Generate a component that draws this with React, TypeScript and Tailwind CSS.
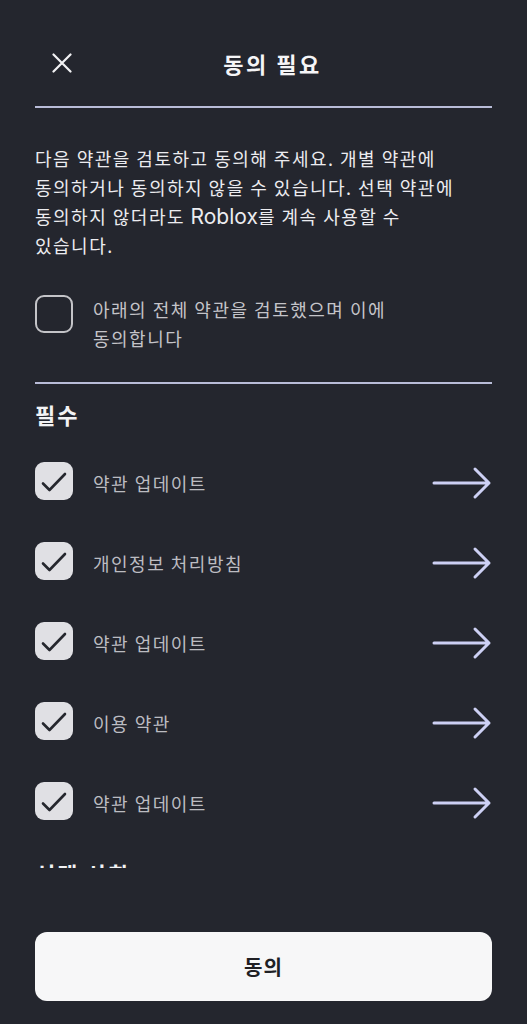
import React from "react";

const font = { fontFamily: '"Noto Sans CJK KR", "Noto Sans", sans-serif' };

function Arrow() {
  return (
    <svg width="60" height="34" viewBox="0 0 60 34" fill="none" className="shrink-0">
      <path d="M2 17H57M43 3L57 17L43 31" stroke="#cdd0f4" strokeWidth="3" strokeLinecap="round" strokeLinejoin="round" />
    </svg>
  );
}

function CheckedBox() {
  return (
    <div className="w-[38px] h-[38px] shrink-0 rounded-[9px] bg-[#e0e0e4] flex items-center justify-center -mt-[5px]">
      <svg width="38" height="38" viewBox="0 0 38 38" fill="none">
        <path d="M8 21.5L14.5 28L30 12" stroke="#25272e" strokeWidth="2.6" strokeLinecap="round" strokeLinejoin="round" />
      </svg>
    </div>
  );
}

const items = ["약관 업데이트", "개인정보 처리방침", "약관 업데이트", "이용 약관", "약관 업데이트"];

export default function App() {
  return (
    <div className="w-full h-[1024px] bg-[#24262e] flex flex-col overflow-hidden" style={font}>
      <div className="px-[35px] shrink-0">
        <div className="flex items-center h-[106px] pt-[20px]">
          <button className="w-[54px] h-[40px] flex items-center justify-center shrink-0">
            <svg width="20" height="20" viewBox="0 0 20 20" fill="none">
              <path d="M1.5 1.5L18.5 18.5M18.5 1.5L1.5 18.5" stroke="#f2f2f4" strokeWidth="2.2" strokeLinecap="round" />
            </svg>
          </button>
          <div className="flex-1 text-center text-[22px] tracking-[2.5px] font-bold text-[#f5f5f7] leading-[30px]">동의 필요</div>
          <div className="w-[36px] shrink-0" />
        </div>
        <div className="h-[2px] bg-[#b9bcd8]" />
      </div>

      <div className="h-[760px] shrink-0 overflow-hidden px-[35px]">
        <p className="mt-[36px] pr-[20px] text-[18px] tracking-[1.5px] leading-[29px] text-[#ececf0] break-keep">
          다음 약관을 검토하고 동의해 주세요. 개별 약관에 동의하거나 동의하지 않을 수 있습니다. 선택 약관에 동의하지 않더라도{" "}
          <span className="text-[21px] leading-none tracking-normal" style={{ fontFamily: 'Inter, "Noto Sans", sans-serif' }}>Roblox</span>를 계속 사용할 수 있습니다.
        </p>

        <div className="mt-[35px] flex items-start gap-[20px]">
          <div className="w-[38px] h-[38px] shrink-0 rounded-[9px] border-2 border-[#c4c4c8]" />
          <div className="text-[18px] tracking-[1.5px] leading-[29px] text-[#c4c4c9] pr-[60px] break-keep">
            아래의 전체 약관을 검토했으며 이에 동의합니다
          </div>
        </div>

        <div className="mt-[29px] h-[2px] bg-[#b9bcd8]" />

        <div className="mt-[16px] text-[22px] tracking-[2px] leading-[28px] font-bold text-[#f2f2f4]">필수</div>

        <div className="mt-[15px] flex flex-col">
          {items.map((t, i) => (
            <div key={i} className="h-[80px] flex items-center gap-[20px]">
              <CheckedBox />
              <div className="flex-1 text-[18px] tracking-[1.5px] leading-[29px] text-[#bcbcc2]">{t}</div>
              <Arrow />
            </div>
          ))}
        </div>

        <div className="mt-[16px] text-[22px] tracking-[2px] leading-[28px] font-bold text-[#f2f2f4]">선택 사항</div>
      </div>

      <div className="px-[35px] pt-[64px] pb-[23px] shrink-0">
        <button className="w-full h-[69px] rounded-[12px] bg-[#f7f7f8] text-[20px] tracking-[1px] font-bold text-[#202024]">
          동의
        </button>
      </div>
    </div>
  );
}
